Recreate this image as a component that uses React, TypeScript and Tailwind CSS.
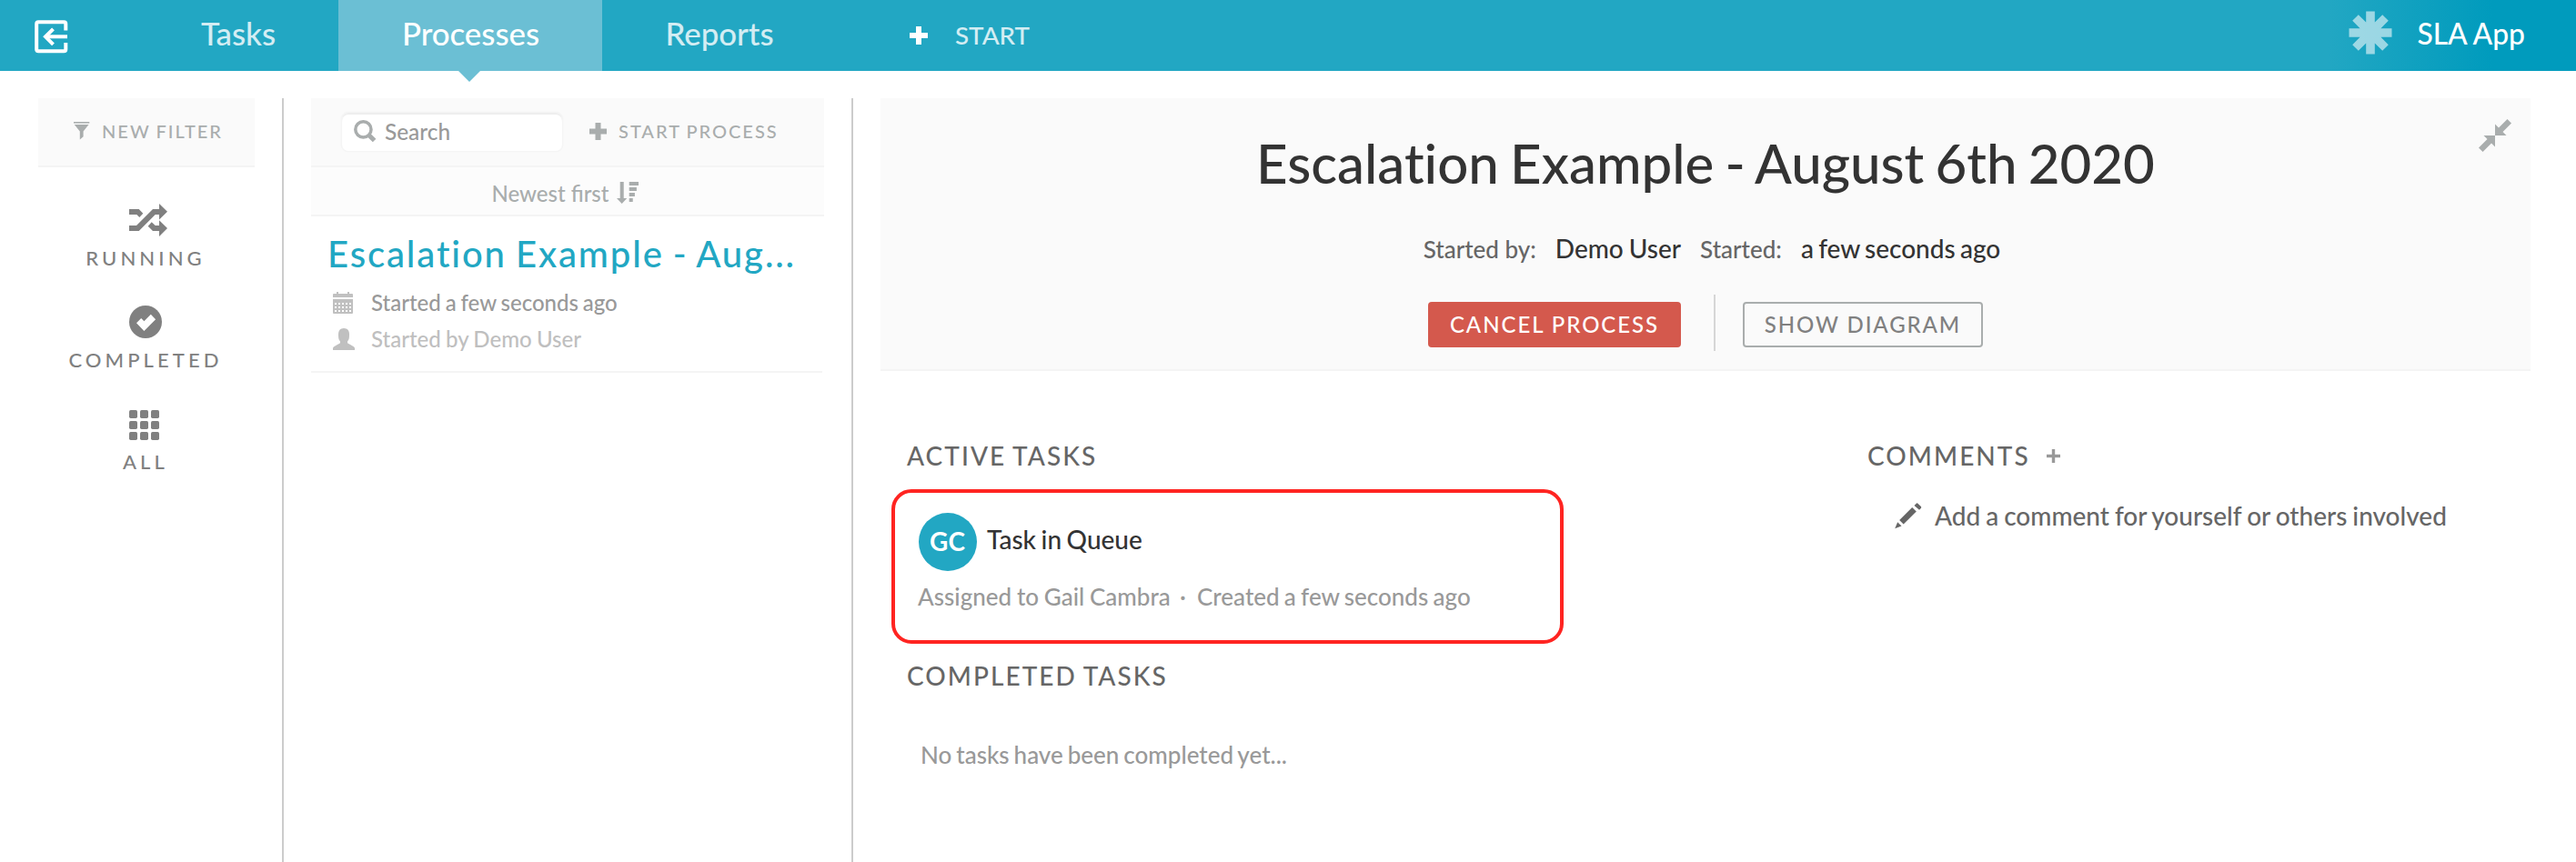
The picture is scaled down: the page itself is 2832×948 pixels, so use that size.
import type { ReactNode } from "react";

function LogoutIcon() {
  return (
    <svg width="38" height="38" viewBox="0 0 38 38" fill="none" stroke="#fff" strokeWidth="4">
      <path d="M35.3 12.6V5.2Q35.3 3.2 33.3 3.2H5.2Q3.2 3.2 3.2 5.2V33.3Q3.2 35.3 5.2 35.3H33.3Q35.3 35.3 35.3 33.3V26" />
      <path d="M37 19.3H13" />
      <path d="M21.5 10.8L13 19.3L21.5 27.8" />
    </svg>
  );
}

function PlusIcon({ size, bar, color }: { size: number; bar: number; color: string }) {
  const a = (size - bar) / 2;
  return (
    <svg width={size} height={size} viewBox={`0 0 ${size} ${size}`} fill={color}>
      <rect x={a} y="0" width={bar} height={size} />
      <rect x="0" y={a} width={size} height={bar} />
    </svg>
  );
}

function AsteriskIcon() {
  return (
    <svg width="48" height="48" viewBox="0 0 48 48" fill="#fff" opacity="0.57">
      <path d="M19.2 .5H28.8V12.6L37.2 4.2L43.8 10.8L35.4 19.2H47.5V28.8H35.4L43.8 37.2L37.2 43.8L28.8 35.4V47.5H19.2V35.4L10.8 43.8L4.2 37.2L12.6 28.8H.5V19.2H12.6L4.2 10.8L10.8 4.2L19.2 12.6Z" />
    </svg>
  );
}

function FunnelIcon() {
  return (
    <svg width="18" height="20" viewBox="0 0 18 20" fill="#a9adad">
      <path d="M0 0H17.3V1.6H0Z" />
      <path d="M.8 3H16.5L10.6 10.4V16.2L6.8 19.6V10.4Z" />
    </svg>
  );
}

function SearchIcon() {
  return (
    <svg width="25" height="25" viewBox="0 0 25 25" fill="none" stroke="#a9adad">
      <circle cx="10.4" cy="10.4" r="8.6" strokeWidth="3.5" />
      <path d="M16.4 16.4L22.6 22.6" strokeWidth="5" />
    </svg>
  );
}

function SortIcon() {
  return (
    <svg width="24" height="24" viewBox="0 0 24 24" fill="#a9adad">
      <path d="M3.7 0H7.7V18H11.3L5.7 24L0 18H3.7Z" />
      <path d="M13.7 0H24V4H13.7Z M13.7 6H21.9V10H13.7Z M13.7 12H19.9V16H13.7Z M13.7 18H17.7V22H13.7Z" />
    </svg>
  );
}

function ShuffleIcon() {
  return (
    <svg className="shrink-0" width="42" height="36" viewBox="0 0 42 36" fill="#808080">
      <path d="M0 6H10.7L15.3 10.7L11.3 15L8.3 12H0Z" />
      <path d="M0 24H8L26 6H33V0L42 8.8L33 17.6V12H28.7L10.7 30H0Z" />
      <path d="M20.7 24.7L24.7 20.3L28.7 24H33V18.3L42 27L33 36V30H26Z" />
    </svg>
  );
}

function CheckIcon() {
  return (
    <svg className="shrink-0" width="36" height="36" viewBox="0 0 36 36" fill="#808080">
      <circle cx="18" cy="18" r="18" />
      <path d="M8 19.2L13.2 14L16.4 17.2L23.8 9.8L29.1 15.2L16.4 28Z" fill="#fff" />
    </svg>
  );
}

function GridIcon() {
  return (
    <svg className="mt-[3px] shrink-0" width="33" height="33" viewBox="0 0 33 33" fill="#808080">
      {[0, 12, 24].map((y) =>
        [0, 12, 24].map((x) => <rect key={`${x}-${y}`} x={x} y={y} width="9" height="9" rx="1.7" />)
      )}
    </svg>
  );
}

function CalendarIcon() {
  return (
    <svg width="22" height="24" viewBox="0 0 22 24" fill="#c0c0c0">
      <path d="M0 3Q0 2 1 2H4V0H6V2H16V0H18V2H21Q22 2 22 3V6H0Z" />
      <path d="M0 8H22V23Q22 24 21 24H1Q0 24 0 23Z" />
      <g fill="#fff">
        {[12, 16, 20].map((y) =>
          [2, 6, 10, 14, 18].map((x) => <rect key={`${x}-${y}`} x={x} y={y} width="2" height="2" />)
        )}
      </g>
    </svg>
  );
}

function PersonIcon() {
  return (
    <svg width="24" height="24" viewBox="0 0 24 24" fill="#c0c0c0">
      <path d="M12 0C16 0 18 2.8 18 6.5C18 8 18 9.5 17.8 10.8C17.5 12.7 16.7 13.7 16 14.6V16.2L22.5 20Q24 20.8 24 22V24H0V22Q0 20.8 1.5 20L8 16.2V14.6C7.3 13.7 6.5 12.7 6.2 10.8C6 9.5 6 8 6 6.5C6 2.8 8 0 12 0Z" />
    </svg>
  );
}

function ShrinkIcon() {
  return (
    <svg width="36" height="36" viewBox="0 0 36 36" fill="#a9adad">
      <path d="M18 5.5L22 9.5L31.5 0L36 4.5L26.5 14L30.5 18H18Z" />
      <path d="M18 30.5L14 26.5L4.5 36L0 31.5L9.5 22L5.5 18H18Z" />
    </svg>
  );
}

function PencilIcon() {
  return (
    <svg width="30" height="29" viewBox="0 0 30 29" fill="#666">
      <path d="M.2 28.3L3.2 21.2L7.5 25.6Z" />
      <path d="M5.2 19.1L19.2 5L23.8 9.6L9.7 23.6Z" />
      <path d="M21.5 3L23.5 .9Q24.6 -.2 25.7 .9L28.6 3.7Q29.7 4.8 28.8 5.9L27 7.7Z" />
    </svg>
  );
}

function FilterItem({ icon, label }: { icon: ReactNode; label: string }) {
  return (
    <div className="flex h-[112px] flex-col items-center">
      <div className="flex h-[44px] w-[38px] items-start">{icon}</div>
      <div className="pr-[2px] text-[22px] leading-[32px] tracking-[4.1px] text-[#808080]">{label}</div>
    </div>
  );
}

function SectionTitle({ children }: { children: ReactNode }) {
  return <h2 className="text-[28px] leading-[36px] font-medium tracking-[2.05px] text-[#666] [word-spacing:-1.5px]">{children}</h2>;
}

export default function App() {
  return (
    <div className="h-[948px] w-[2832px] overflow-hidden bg-white font-['Lato',sans-serif] font-medium">
      <header className="flex h-[78px] items-stretch bg-[linear-gradient(90deg,#22a7c3_0,#22a7c3_2560px,#009bbd_2740px,#009bbd_100%)] text-white">
        <div className="flex w-[151px] items-center pt-[2px] pl-[37px]">
          <LogoutIcon />
        </div>
        <nav className="flex text-[34.8px]">
          <div className="flex w-[221px] items-center justify-center pb-[4px] pl-[1px] text-white/80">Tasks</div>
          <div className="relative flex w-[290px] items-center justify-center bg-[#6bbfd4] pb-[4px] pl-[1px]">
            Processes
            <span className="absolute top-[78px] left-[132px] border-x-[12px] border-t-[12px] border-x-transparent border-t-[#6bbfd4]" />
          </div>
          <div className="flex w-[258px] items-center justify-center pb-[4px] text-white/80">Reports</div>
        </nav>
        <div className="ml-[80px] flex items-center gap-[30px]">
          <PlusIcon size={20} bar={6} color="#fff" />
          <span className="text-[27.8px] text-white/80">START</span>
        </div>
        <div className="ml-auto flex items-center gap-[27px] pr-[56px]">
          <div className="pb-[6px]">
            <AsteriskIcon />
          </div>
          <span className="pb-[2px] text-[31.8px]">SLA App</span>
        </div>
      </header>

      <main className="flex h-[870px] pt-[30px] pl-[42px]">
        <aside className="w-[238px]">
          <div className="flex h-[76px] items-center justify-center gap-[13px] border-b-2 border-[#f4f4f4] bg-[#fafafa] pb-[2px] pl-[4px]">
            <FunnelIcon />
            <span className="text-[20px] leading-[26px] tracking-[2px] text-[#a9adad] [word-spacing:-1px]">NEW FILTER</span>
          </div>
          <div className="pt-[40px]">
            <FilterItem icon={<ShuffleIcon />} label="RUNNING" />
            <FilterItem icon={<CheckIcon />} label="COMPLETED" />
            <FilterItem icon={<GridIcon />} label="ALL" />
          </div>
        </aside>

        <section className="ml-[30px] w-[626px] shrink-0 border-l-2 border-[#ccc] pl-[30px]">
          <div className="w-[564px]">
            <div className="flex h-[76px] items-center border-b-2 border-[#f4f4f4] bg-[#fafafa] pl-[34px] text-[#a9adad]">
              <div className="flex h-[42px] w-[242px] items-center gap-[9px] rounded-[7px] bg-white pb-[2px] pl-[13px] shadow-[inset_0_2px_1px_#eeeeee,0_0_0_1.5px_#f5f5f5]">
                <SearchIcon />
                <span className="pt-[2px] text-[24.4px] text-[#999]">Search</span>
              </div>
              <div className="ml-[30px] flex items-center gap-[13px] pb-[2px]">
                <PlusIcon size={19} bar={6} color="#a9adad" />
                <span className="text-[20px] leading-[26px] tracking-[2px] [word-spacing:-1px]">START PROCESS</span>
              </div>
            </div>
            <div className="flex h-[54px] items-center justify-center gap-[9px] border-b-2 border-[#f4f4f4] bg-[#fcfcfc] pt-[4px] pr-[5px] text-[24px] leading-[30px] text-[#a9adad]">
              <span className="pt-[2px]">Newest first</span>
              <SortIcon />
            </div>
            <article className="h-[172px] w-[562px] border-b-2 border-[#f4f4f4] pt-[17px] pl-[18px]">
              <h3 className="text-[40px] leading-[48px] tracking-[1.9px] whitespace-nowrap text-[#22a7c3] [word-spacing:-2px]">
                Escalation Example - Aug...
              </h3>
              <div className="mt-[10px] flex h-[40px] items-center pl-[6px] text-[24px] text-[#999]">
                <div className="w-[42px]">
                  <CalendarIcon />
                </div>
                <span className="[word-spacing:-1.2px]">Started a few seconds ago</span>
              </div>
              <div className="flex h-[40px] items-center pl-[6px] text-[24px] text-[#bfbfbf]">
                <div className="w-[42px]">
                  <PersonIcon />
                </div>
                <span className="[word-spacing:-.8px]">Started by Demo User</span>
              </div>
            </article>
          </div>
        </section>

        <section className="w-[1846px] shrink-0 border-l-2 border-[#ccc] pl-[30px]">
          <div className="relative flex h-[300px] flex-col items-center border-b-2 border-[#f4f4f4] bg-[#fafafa] pt-[35px]">
            <div className="absolute top-[23px] right-[21px]">
              <ShrinkIcon />
            </div>
            <h1 className="text-[60px] leading-[72px] text-[#333] [font-variant-ligatures:none] [word-spacing:-3px]">
              Escalation Example - August 6th 2020
            </h1>
            <div className="mt-[40px] ml-[14px] flex items-baseline gap-[21px] leading-[36px]">
              <span className="text-[26px] text-[#666]">Started by:</span>
              <span className="text-[28px] text-[#333] [word-spacing:-1px]">Demo User</span>
              <span className="text-[26px] text-[#666]">Started:</span>
              <span className="text-[28px] text-[#333] [word-spacing:-1.8px]">a few seconds ago</span>
            </div>
            <div className="mt-[32px] flex h-[62px] items-center">
              <button className="mt-[4px] flex h-[50px] w-[278px] items-center justify-center rounded-[4px] bg-[#d4594d] text-[24px] tracking-[1.95px] text-white">
                CANCEL PROCESS
              </button>
              <span className="ml-[36px] h-[62px] w-[2px] bg-[#d6d6d6]" />
              <button className="mt-[4px] ml-[30px] flex h-[50px] w-[264px] items-center justify-center rounded-[4px] border-2 border-[#a9adad] text-[24px] tracking-[1.9px] text-[#808080]">
                SHOW DIAGRAM
              </button>
            </div>
          </div>

          <div className="flex pt-[75px]">
            <div className="w-[1056px] pl-[12px]">
              <div className="pl-[17px]">
                <SectionTitle>ACTIVE TASKS</SectionTitle>
              </div>
              <div className="mt-[19px] h-[170px] w-[739px] rounded-[22px] border-4 border-[#ff2421] pt-[22px] pl-[25px]">
                <div className="flex items-center gap-[11px] pl-[1px]">
                  <span className="flex size-[64px] items-center justify-center rounded-full bg-[#22a7c3] pr-[1px] pb-[2px] text-[28px] font-bold text-white">GC</span>
                  <span className="pb-[6px] text-[28px] leading-[36px] text-[#333] [word-spacing:-1.5px]">Task in Queue</span>
                </div>
                <div className="mt-[10px] flex text-[26px] leading-[36px] text-[#999]">
                  <span className="w-[288px] [word-spacing:-.8px]">Assigned to Gail Cambra</span>
                  <span className="w-[19px]">·</span>
                  <span className="[word-spacing:-1.3px]">Created a few seconds ago</span>
                </div>
              </div>
              <div className="mt-[17px] pl-[17px]">
                <SectionTitle>COMPLETED TASKS</SectionTitle>
              </div>
              <p className="mt-[51px] pl-[32px] text-[26px] leading-[36px] text-[#999] [word-spacing:-1.6px]">No tasks have been completed yet...</p>
            </div>
            <div className="pl-[29px]">
              <div className="flex items-center gap-[18px]">
                <SectionTitle>COMMENTS</SectionTitle>
                <PlusIcon size={15} bar={3.4} color="#999" />
              </div>
              <div className="mt-[30px] flex items-center gap-[14px] pl-[30px]">
                <PencilIcon />
                <span className="text-[28px] leading-[36px] text-[#666] [word-spacing:-1.1px]">Add a comment for yourself or others involved</span>
              </div>
            </div>
          </div>
        </section>
      </main>
    </div>
  );
}
